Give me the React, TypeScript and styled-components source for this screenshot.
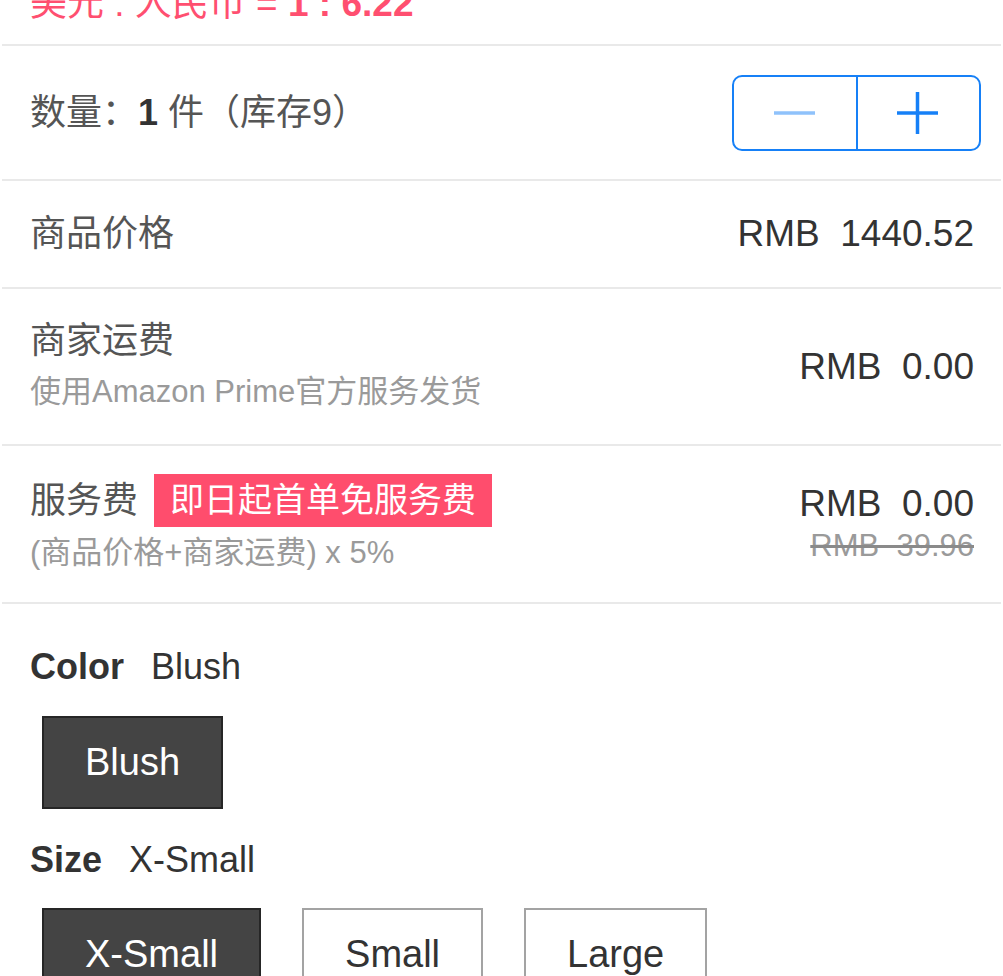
import React from "react";
import styled, { createGlobalStyle } from "styled-components";

const GlobalStyle = createGlobalStyle`
  html, body {
    margin: 0;
    padding: 0;
    background: #ffffff;
    overflow: hidden;
  }
  body {
    font-family: "Liberation Sans", "Noto Sans CJK SC", sans-serif;
    -webkit-font-smoothing: antialiased;
  }
  * { box-sizing: border-box; }
`;

const Page = styled.div`
  width: 1003px;
  padding: 0 2px;
`;

const Row = styled.div<{ $h: number; $pr?: number; $mt?: number }>`
  height: ${(p) => p.$h}px;
  margin-top: ${(p) => p.$mt ?? 0}px;
  padding: 0 ${(p) => p.$pr ?? 27}px 0 28px;
  border-bottom: 2px solid #e9e9e9;
  display: flex;
  align-items: center;
  justify-content: space-between;
`;

const RateText = styled.div`
  font-size: 37px;
  line-height: 44px;
  color: #ff4f70;
  white-space: pre;
`;

const Strong = styled.b`
  font-weight: 700;
`;

const Label = styled.div`
  font-size: 36px;
  line-height: 44px;
  color: #555555;
  white-space: pre;
  display: flex;
  align-items: center;
`;

const Qty = styled.b`
  font-weight: 700;
  color: #333333;
`;

const Stepper = styled.div`
  width: 249px;
  height: 76px;
  border: 2px solid #1680f7;
  border-radius: 10px;
  display: flex;
  overflow: hidden;
`;

const StepButton = styled.button<{ $divider?: boolean }>`
  flex: 1;
  border: none;
  border-left: ${(p) => (p.$divider ? "2px solid #1680f7" : "none")};
  background: transparent;
  padding: 0;
  display: flex;
  align-items: center;
  justify-content: center;
`;

const TextBlock = styled.div<{ $gap?: number }>`
  display: flex;
  flex-direction: column;
  gap: ${(p) => p.$gap ?? 0}px;
`;

const Sub = styled.div`
  font-size: 31px;
  line-height: 44px;
  color: #9a9a9a;
  white-space: pre;
`;

const Value = styled.div`
  font-size: 37px;
  line-height: 44px;
  color: #333333;
  white-space: pre;
  text-align: right;
`;

const OldValue = styled.div`
  font-size: 31px;
  line-height: 40px;
  color: #9a9a9a;
  white-space: pre;
  text-align: right;
  text-decoration: line-through;
  text-decoration-color: #8a8a8a;
`;

const ValueBlock = styled.div`
  display: flex;
  flex-direction: column;
  align-items: flex-end;
`;

const TitleLine = styled.div`
  display: flex;
  align-items: center;
  height: 54px;
`;

const Badge = styled.span`
  margin-left: 16px;
  height: 53px;
  padding: 0 16px;
  background: #ff4d6d;
  color: #ffffff;
  font-size: 34px;
  line-height: 53px;
  white-space: pre;
`;

const Section = styled.div`
  padding: 41px 28px 0 28px;
`;

const OptionLabel = styled.div<{ $mt?: number }>`
  margin-top: ${(p) => p.$mt ?? 0}px;
  font-size: 36px;
  line-height: 44px;
  color: #333333;
  display: flex;
  gap: 27px;
`;

const OptionName = styled.span`
  font-weight: 700;
`;

const Options = styled.div<{ $mt: number }>`
  margin-top: ${(p) => p.$mt}px;
  padding-left: 12px;
  display: flex;
  gap: 41px;
`;

const Option = styled.div<{ $selected?: boolean }>`
  height: 93px;
  min-width: 180px;
  padding: 0 41px;
  border: 2px solid ${(p) => (p.$selected ? "#262626" : "#a3a3a3")};
  background: ${(p) => (p.$selected ? "#444444" : "#ffffff")};
  color: ${(p) => (p.$selected ? "#ffffff" : "#333333")};
  font-size: 38px;
  line-height: 89px;
  text-align: center;
  white-space: pre;
`;

const Minus = () => (
  <svg width="44" height="10" viewBox="0 0 44 10">
    <line x1="1" y1="5" x2="42" y2="5" stroke="#8fc2fb" strokeWidth="3.5" />
  </svg>
);

const Plus = () => (
  <svg width="44" height="44" viewBox="0 0 44 44">
    <line x1="1" y1="22" x2="42" y2="22" stroke="#1680f7" strokeWidth="3.5" />
    <line x1="21.5" y1="1" x2="21.5" y2="43" stroke="#1680f7" strokeWidth="3.5" />
  </svg>
);

export default function App() {
  return (
    <>
      <GlobalStyle />
      <Page>
        <Row $h={83} $mt={-37}>
          <RateText>
            美元 : 人民币 = <Strong>1 : 6.22</Strong>
          </RateText>
        </Row>
        <Row $h={135} $pr={20}>
          <Label>
            数量：<Qty>1</Qty> 件（库存9）
          </Label>
          <Stepper>
            <StepButton aria-label="decrease">
              <Minus />
            </StepButton>
            <StepButton $divider aria-label="increase">
              <Plus />
            </StepButton>
          </Stepper>
        </Row>
        <Row $h={108}>
          <Label>商品价格</Label>
          <Value>RMB  1440.52</Value>
        </Row>
        <Row $h={157}>
          <TextBlock $gap={7}>
            <Label>商家运费</Label>
            <Sub>使用Amazon Prime官方服务发货</Sub>
          </TextBlock>
          <Value>RMB  0.00</Value>
        </Row>
        <Row $h={158}>
          <TextBlock $gap={3}>
            <TitleLine>
              <Label>服务费</Label>
              <Badge>即日起首单免服务费</Badge>
            </TitleLine>
            <Sub>(商品价格+商家运费) x 5%</Sub>
          </TextBlock>
          <ValueBlock>
            <Value>RMB  0.00</Value>
            <OldValue>RMB  39.96</OldValue>
          </ValueBlock>
        </Row>
        <Section>
          <OptionLabel>
            <OptionName>Color</OptionName>
            <span>Blush</span>
          </OptionLabel>
          <Options $mt={27}>
            <Option $selected>Blush</Option>
          </Options>
          <OptionLabel $mt={29}>
            <OptionName>Size</OptionName>
            <span>X-Small</span>
          </OptionLabel>
          <Options $mt={26}>
            <Option $selected>X-Small</Option>
            <Option>Small</Option>
            <Option>Large</Option>
          </Options>
        </Section>
      </Page>
    </>
  );
}
